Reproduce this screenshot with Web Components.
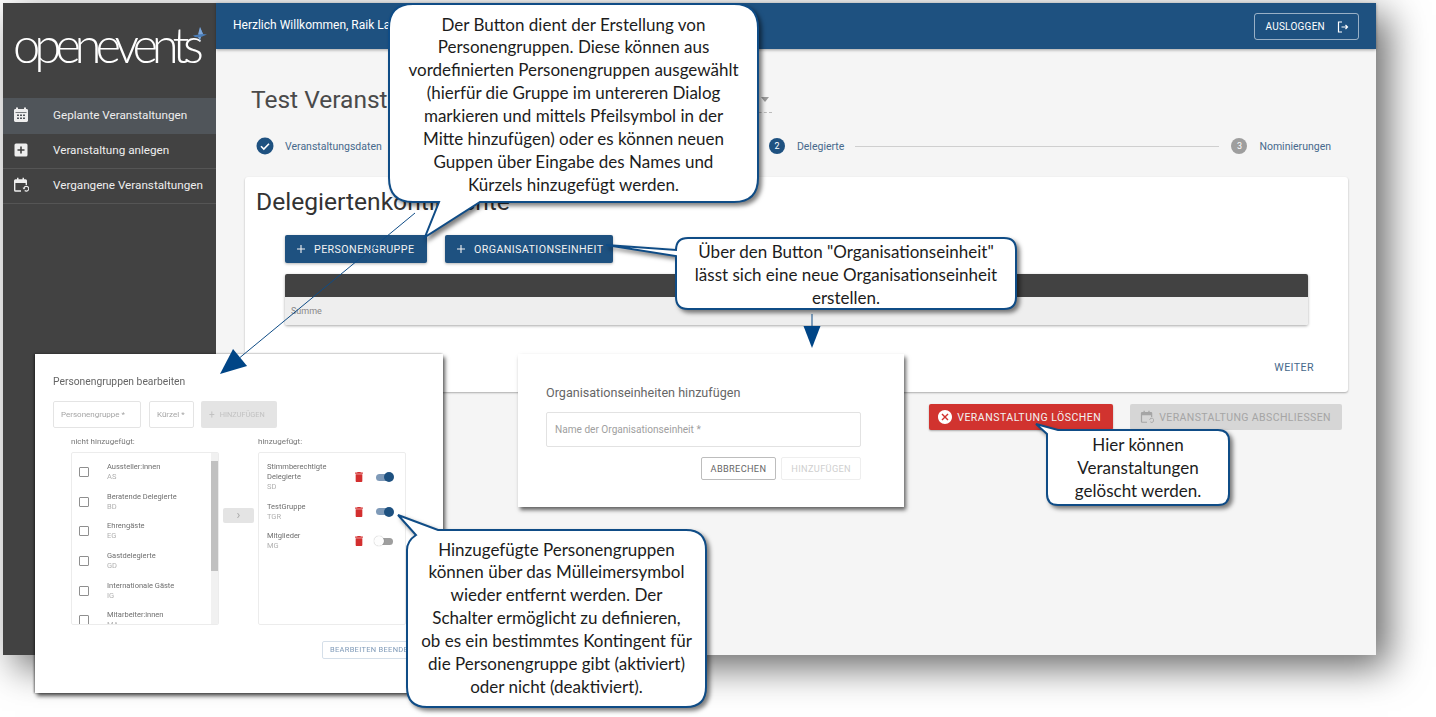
<!DOCTYPE html>
<html lang="de">
<head>
<meta charset="utf-8">
<title>openevents</title>
<style>
    html, body { margin: 0; background: #fff; }
    body { font-family: Roboto, "Liberation Sans", sans-serif; overflow: hidden; }
    oe-canvas { width: 1436px; height: 717px; }
</style>
</head>
<body>
<oe-canvas>
    <oe-window>
        <oe-sidebar slot="side">
            <oe-nav-item active>
                <svg slot="icon" width="16" height="16" viewBox="0 0 16 16"><path fill="#eee" d="M3 .5h2V2h6V.5h2V2h.6c.8 0 1.4.6 1.4 1.4v10.2c0 .8-.6 1.4-1.4 1.4H2.400c-.8 0-1.400-.6-1.400-1.400V3.400C1 2.600 1.600 2 2.400 2H3z"/><path fill="#50555a" d="M2.500 5h11v.8h-11zM4 7.500h2v1.500H4zM7 7.500h2v1.500H7zM10 7.500h2v1.500h-2zM4 10.500h2V12H4zM7 10.500h2V12H7zM10 10.500h2V12h-2z"/></svg>
                Geplante Veranstaltungen
            </oe-nav-item>
            <oe-nav-item>
                <svg slot="icon" width="16" height="16" viewBox="0 0 16 16"><rect x="1.500" y="1.500" width="13" height="13" rx="1.500" fill="#eee"/><path fill="#424242" d="M7.200 4.500h1.600v2.700h2.700v1.600H8.800v2.700H7.200V8.800H4.500V7.200h2.700z"/></svg>
                Veranstaltung anlegen
            </oe-nav-item>
            <oe-nav-item>
                <svg slot="icon" width="16" height="16" viewBox="0 0 16 16"><path fill="none" stroke="#eee" stroke-width="1.400" d="M8 14H2.500c-.5 0-.8-.3-.8-.8V3.800c0-.5.3-.8.8-.8h10c.5 0 .8.300.8.800V8"/><path fill="#eee" d="M2 3h11v3H2zM4 .8h1.500V3H4zM9.500.8H11V3H9.500z"/><path fill="none" stroke="#eee" stroke-width="1.100" d="M11 11.200a2.400 2.400 0 1 1 .7 2.300"/><path fill="#eee" d="M9.500 10.800h3l-1.500 1.600z"/></svg>
                Vergangene Veranstaltungen
            </oe-nav-item>
        </oe-sidebar>
        <oe-header slot="top" welcome="Herzlich Willkommen, Raik Lange"></oe-header>
        <oe-event-title>Test Veranstaltung</oe-event-title>
        <oe-stepper>
            <oe-step state="done">Veranstaltungsdaten</oe-step>
            <oe-step state="active" nr="2">Delegierte</oe-step>
            <oe-step nr="3">Nominierungen</oe-step>
        </oe-stepper>
        <oe-contingent-card></oe-contingent-card>
        <oe-event-actions></oe-event-actions>
    </oe-window>

    <oe-arrow x1="415" y1="213" x2="220" y2="374" len="26" wide="22"></oe-arrow>
    <oe-arrow x1="812" y1="314" x2="812" y2="348" len="22" wide="17"></oe-arrow>

    <oe-groups-dialog style="left:35px;top:354px"></oe-groups-dialog>
    <oe-unit-dialog style="left:518px;top:354px"></oe-unit-dialog>

    <oe-callout box="389 6 369 198" d="M413 4H734Q758 4 758 28V178Q758 202 734 202H480L425 237L439 202H413Q389 202 389 178V28Q389 4 413 4Z">
        Der Button dient der Erstellung von<br>Personengruppen. Diese können aus<br>vordefinierten Personengruppen ausgewählt<br>(hierfür die Gruppe im untereren Dialog<br>markieren und mittels Pfeilsymbol in der<br>Mitte hinzufügen) oder es können neuen<br>Guppen über Eingabe des Names und<br>Kürzels hinzugefügt werden.
    </oe-callout>
    <oe-callout box="676 240 340 71" d="M688 238H1004Q1016 238 1016 250V297Q1016 309 1004 309H688Q676 309 676 297V256L606 245L676 250Q676 238 688 238Z">
        Über den Button "Organisationseinheit"<br>lässt sich eine neue Organisationseinheit<br>erstellen.
    </oe-callout>
    <oe-callout box="1047 431 182 75" d="M1058 430H1218Q1229 430 1229 441V494Q1229 505 1218 505H1058Q1047 505 1047 494V434L1036 424Z">
        Hier können<br>Veranstaltungen<br>gelöscht werden.
    </oe-callout>
    <oe-callout box="407 530 299 177" d="M438 530H686Q706 530 706 550V687Q706 707 686 707H427Q407 707 407 687V550Q407 541 416 535L398 515Z">
        Hinzugefügte Personengruppen<br>können über das Mülleimersymbol<br>wieder entfernt werden. Der<br>Schalter ermöglicht zu definieren,<br>ob es ein bestimmtes Kontingent für<br>die Personengruppe gibt (aktiviert)<br>oder nicht (deaktiviert).
    </oe-callout>
</oe-canvas>

<script>
    const BLUE = '#1e5180';

    class OeCanvas extends HTMLElement {
        constructor() {
            super();
            this.attachShadow({ mode: 'open' }).innerHTML = `
                <style>
                    :host { display: block; position: relative; overflow: hidden; }
                </style>
                <slot></slot>
            `;
        }
    }

    class OeWindow extends HTMLElement {
        constructor() {
            super();
            this.attachShadow({ mode: 'open' }).innerHTML = `
                <style>
                    :host {
                        display: flex;
                        width: 1373px;
                        height: 652px;
                        margin: 3px 0 0 3px;
                        background: #f5f5f5;
                        box-shadow: 12px 12px 36px rgba(0,0,0,.6);
                    }
                    .right { flex: 1; display: flex; flex-direction: column; min-width: 0; }
                    .content { flex: 1; display: flex; flex-direction: column; padding: 0 28px 0 29px; }
                </style>
                <slot name="side"></slot>
                <div class="right">
                    <slot name="top"></slot>
                    <div class="content"><slot></slot></div>
                </div>
            `;
        }
    }

    class OeSidebar extends HTMLElement {
        constructor() {
            super();
            this.attachShadow({ mode: 'open' }).innerHTML = `
                <style>
                    :host { display: block; width: 213px; background: #424242; flex: none; }
                    .logo { height: 95px; box-sizing: border-box; padding: 11px 0 0 10px; position: relative; }
                    .word {
                        font: 300 49px/60px Lato, sans-serif;
                        letter-spacing: -6.100px;
                        color: #fff;
                    }
                    svg { position: absolute; left: 187px; top: 23px; }
                </style>
                <div class="logo">
                    <span class="word">openevents</span>
                    <svg width="18" height="18" viewBox="0 0 18 18"><path fill="#4a7db8" d="M10 1l3 7 4 .5-6 2.500-1 .5-5-.5-2-1.500 6-1z"/><path fill="#7ba6da" d="M10 1l3 7-5 .5zM8 11l3 0-1 4z"/></svg>
                </div>
                <slot></slot>
            `;
        }
    }

    class OeNavItem extends HTMLElement {
        constructor() {
            super();
            this.attachShadow({ mode: 'open' }).innerHTML = `
                <style>
                    :host {
                        display: flex;
                        align-items: center;
                        height: 32px;
                        padding: 0 0 2px 10px;
                        font-size: 11.700px;
                        color: #eee;
                        border-bottom: 1px solid #555;
                    }
                    :host([active]) { height: 34px; background: #50555a; border-bottom: 0; }
                    .icon { width: 40px; display: flex; flex: none; }
                </style>
                <span class="icon"><slot name="icon"></slot></span>
                <slot></slot>
            `;
        }
    }

    class OeHeader extends HTMLElement {
        constructor() {
            super();
            this.attachShadow({ mode: 'open' }).innerHTML = `
                <style>
                    :host {
                        display: flex;
                        align-items: center;
                        justify-content: space-between;
                        height: 46px;
                        flex: none;
                        padding: 0 17px;
                        background: ${BLUE};
                        color: #fff;
                        font-size: 12px;
                        box-shadow: 0 1px 3px rgba(0,0,0,.35);
                    }
                    .who { padding-bottom: 2px; }
                    .logout {
                        display: flex;
                        align-items: center;
                        gap: 12px;
                        height: 25px;
                        margin-top: 1px;
                        padding: 0 9px 0 10px;
                        border: 1px solid rgba(255,255,255,.55);
                        border-radius: 3px;
                        font-size: 10px;
                        letter-spacing: .25px;
                    }
                </style>
                <span class="who"></span>
                <span class="logout">AUSLOGGEN
                    <svg width="12" height="12" viewBox="0 0 12 12" fill="none" stroke="#fff" stroke-width="1.200"><path d="M5 1H1.500v10H5"/><path d="M4.500 6h6M8.500 4l2 2-2 2"/></svg>
                </span>
            `;
            this.shadowRoot.querySelector('.who').textContent = this.getAttribute('welcome');
        }
    }

    class OeEventTitle extends HTMLElement {
        constructor() {
            super();
            this.attachShadow({ mode: 'open' }).innerHTML = `
                <style>
                    :host {
                        display: flex;
                        justify-content: space-between;
                        align-items: center;
                        width: 521px;
                        height: 28px;
                        margin: 36px 0 0 6px;
                        font-size: 24.500px;
                        color: #4a4a4a;
                        position: relative;
                    }
                    i { width: 0; height: 0; margin-right: 3px; border: 4px solid transparent; border-top: 5px solid #9a9a9a; border-bottom: 0; }
                    u { position: absolute; right: 0; bottom: 0; width: 60px; border-bottom: 1px dashed #bbb; }
                </style>
                <slot></slot><i></i><u></u>
            `;
        }
    }

    class OeStepper extends HTMLElement {
        constructor() {
            super();
            this.attachShadow({ mode: 'open' }).innerHTML = `
                <style>
                    :host {
                        display: flex;
                        align-items: center;
                        height: 18px;
                        margin: 24px 17px 22px 11px;
                    }
                </style>
                <slot></slot>
            `;
        }
    }

    class OeStep extends HTMLElement {
        constructor() {
            super();
            const done = this.getAttribute('state') === 'done';
            const mark = done
                ? `<svg width="18" height="18" viewBox="0 0 18 18"><circle cx="9" cy="9" r="8.500" fill="${BLUE}"/><path d="M5 9.200l2.800 2.800L13 6.700" fill="none" stroke="#fff" stroke-width="1.600"/></svg>`
                : `<span class="nr">${this.getAttribute('nr')}</span>`;
            this.attachShadow({ mode: 'open' }).innerHTML = `
                <style>
                    :host { display: flex; align-items: center; flex: 1 1 auto; font-size: 10.500px; color: #47698c; }
                    :host(:last-child) { flex: 0 0 auto; }
                    .mark { display: flex; margin-right: ${done ? 11 : 12}px; }
                    .nr {
                        width: 16px; height: 16px; border-radius: 50%;
                        background: #9e9e9e; color: #fff;
                        font-size: 9px; line-height: 16px; text-align: center;
                    }
                    :host([state=active]) .nr { background: ${BLUE}; }
                    .line { flex: 1; height: 1px; background: #cfcfcf; margin: 0 12px 0 11px; }
                    :host(:last-child) .line { display: none; }
                    .wrap { display: flex; align-items: center; flex: 1; }
                </style>
                <span class="wrap">
                    <span class="mark">${mark}</span>
                    <slot></slot>
                    <span class="line"></span>
                </span>
            `;
        }
    }

    class OeButton extends HTMLElement {
        constructor() {
            super();
            this.attachShadow({ mode: 'open' }).innerHTML = `
                <style>
                    :host {
                        display: inline-flex;
                        align-items: center;
                        box-sizing: border-box;
                        height: 28px;
                        padding: 0 11px;
                        gap: 8px;
                        border-radius: 2px;
                        background: ${BLUE};
                        color: #f2f2f2;
                        font-size: 10.700px;
                        letter-spacing: .4px;
                        white-space: nowrap;
                        box-shadow: 0 1px 3px rgba(0,0,0,.3);
                    }
                    :host([kind=danger]) { background: #d1332f; height: 26px; font-size: 10.500px; letter-spacing: .5px; padding: 0 12px 0 9px; gap: 5px; box-shadow: 0 1px 2px rgba(0,0,0,.3); }
                    :host([kind=off]) { background: #d6d6d6; color: #a5a5a5; height: 26px; font-size: 10.500px; padding: 0 11px 0 10px; gap: 5px; box-shadow: none; }
                    :host([kind=flat]) { background: none; color: #47698c; box-shadow: none; padding: 0; height: 16px; }
                    .i { display: flex; }
                </style>
                <span class="i"><slot name="icon"></slot></span>
                <slot></slot>
            `;
        }
    }

    class OeContingentCard extends HTMLElement {
        constructor() {
            super();
            const plus = '<svg slot="icon" width="10" height="10" viewBox="0 0 10 10"><path d="M5 1v8M1 5h8" stroke="#f2f2f2" stroke-width="1.100"/></svg>';
            this.attachShadow({ mode: 'open' }).innerHTML = `
                <style>
                    :host {
                        display: block;
                        box-sizing: border-box;
                        height: 215px;
                        background: #fff;
                        border-radius: 3px;
                        box-shadow: 0 1px 2px rgba(0,0,0,.3);
                        position: relative;
                    }
                    h2 { margin: 0; padding: 10px 0 0 11px; height: 58px; box-sizing: border-box; font-size: 24.600px; line-height: 30px; font-weight: 400; color: #333; }
                    .btns { display: flex; gap: 18px; margin-left: 40px; }
                    .table { margin: 11px 40px 0; border-radius: 2px; overflow: hidden; box-shadow: 0 1px 3px rgba(0,0,0,.35); }
                    .head { height: 23px; background: #424242; }
                    .sum { height: 28px; background: #eee; padding-left: 6px; font-size: 9px; line-height: 28px; color: #888; }
                    .foot { display: flex; justify-content: flex-end; padding: 34px 34px 0 0; }
                </style>
                <h2>Delegiertenkontingente</h2>
                <div class="btns">
                    <oe-button style="width:142px">${plus}PERSONENGRUPPE</oe-button>
                    <oe-button style="width:168px">${plus}ORGANISATIONSEINHEIT</oe-button>
                </div>
                <div class="table">
                    <div class="head"></div>
                    <div class="sum">Summe</div>
                </div>
                <div class="foot"><oe-button kind="flat">WEITER</oe-button></div>
            `;
        }
    }

    class OeEventActions extends HTMLElement {
        constructor() {
            super();
            this.attachShadow({ mode: 'open' }).innerHTML = `
                <style>
                    :host { display: flex; justify-content: flex-end; gap: 17px; margin: 12px 6px 0 0; }
                </style>
                <oe-button kind="danger">
                    <svg slot="icon" width="14" height="14" viewBox="2 2 20 20"><path fill="#fff" d="M12 2C6.470 2 2 6.470 2 12s4.470 10 10 10 10-4.470 10-10S17.530 2 12 2zm5 13.590L15.590 17 12 13.410 8.410 17 7 15.590 10.590 12 7 8.410 8.410 7 12 10.590 15.590 7 17 8.410 13.410 12 17 15.590z"/></svg>
                    VERANSTALTUNG LÖSCHEN
                </oe-button>
                <oe-button kind="off">
                    <svg slot="icon" width="14" height="14" viewBox="0 0 16 16"><path fill="none" stroke="#a5a5a5" stroke-width="1.400" d="M8 14H2.500c-.5 0-.8-.3-.8-.8V3.800c0-.5.3-.8.8-.8h10c.5 0 .8.300.8.800V8"/><path fill="#a5a5a5" d="M2 3h11v3H2zM4 .8h1.500V3H4zM9.500.8H11V3H9.500z"/><path fill="none" stroke="#a5a5a5" stroke-width="1.100" d="M11 11.200a2.400 2.400 0 1 1 .7 2.300"/></svg>
                    VERANSTALTUNG ABSCHLIESSEN
                </oe-button>
            `;
        }
    }

    class OeGroupRow extends HTMLElement {
        constructor() {
            super();
            this.attachShadow({ mode: 'open' }).innerHTML = `
                <style>
                    :host { display: flex; align-items: flex-start; flex: none; height: 29.700px; box-sizing: border-box; }
                    .box { width: 8px; height: 8px; margin: 5px 18px 0 7px; border: 1px solid #8f8f8f; border-radius: 1px; flex: none; }
                    .txt { font-size: 7.500px; line-height: 10px; color: #6e6e6e; }
                    .abbr { color: #b0b0b0; }
                </style>
                <span class="box"></span>
                <span class="txt"><slot></slot><div class="abbr">${this.getAttribute('abbr')}</div></span>
            `;
        }
    }

    class OeChosenRow extends HTMLElement {
        constructor() {
            super();
            const on = this.hasAttribute('on');
            this.attachShadow({ mode: 'open' }).innerHTML = `
                <style>
                    :host { display: flex; align-items: center; box-sizing: border-box; padding-right: 12px; margin-bottom: 9.700px; }
                    .txt { flex: 1; font-size: 7.500px; line-height: 10px; color: #6e6e6e; }
                    .abbr { color: #b0b0b0; }
                    svg { flex: none; }
                    .sw { position: relative; width: 17px; height: 7px; margin-left: 12px; border-radius: 4px; background: ${on ? '#7f9ab8' : '#9e9e9e'}; flex: none; }
                    .sw i { position: absolute; top: -1.500px; ${on ? 'right: -1px' : 'left: -2px'}; width: 10px; height: 10px; border-radius: 50%; background: ${on ? BLUE : '#fdfdfd'}; ${on ? '' : 'box-shadow: 0 0 1px rgba(0,0,0,.4);'} }
                </style>
                <span class="txt"><slot></slot><div class="abbr">${this.getAttribute('abbr')}</div></span>
                <svg width="10" height="10" viewBox="5 3 14 18"><path fill="#d32f2f" d="M6 19c0 1.100.9 2 2 2h8c1.100 0 2-.9 2-2V7H6v12zM19 4h-3.500l-1-1h-5l-1 1H5v2h14V4z"/></svg>
                <span class="sw"><i></i></span>
            `;
        }
    }

    class OeGroupsDialog extends HTMLElement {
        constructor() {
            super();
            this.attachShadow({ mode: 'open' }).innerHTML = `
                <style>
                    :host {
                        position: absolute;
                        width: 408px;
                        height: 339px;
                        background: #fff;
                        box-shadow: -1px 0 2px rgba(0,0,0,.45), 2px 3px 4px rgba(0,0,0,.65);
                        font-size: 9px;
                        color: #777;
                    }
                    .inner { box-sizing: border-box; height: 100%; padding: 21px 0 0 18px; filter: blur(.35px); }
                    h3 { margin: 0 0 13px; font-size: 10.300px; line-height: 13px; font-weight: 400; color: #666; }
                    .row { display: flex; gap: 8px; }
                    .field { box-sizing: border-box; height: 27px; padding: 0 7px; border: 1px solid #e4e4e4; border-radius: 2px; font-size: 8px; line-height: 25px; color: #a5a5a5; }
                    .add { display: flex; align-items: center; gap: 5px; box-sizing: border-box; width: 76px; height: 27px; padding-left: 8px; background: #e4e4e4; border-radius: 2px; font-size: 7.400px; color: #c2c2c2; margin-left: -1px; }
                    .cols { display: grid; grid-template-columns: 148px 39px 148px; margin: 9px 0 0 18px; }
                    .lab { font-size: 8px; line-height: 10px; height: 15px; color: #777; }
                    .list { position: relative; box-sizing: border-box; height: 173px; padding: 9px 0 0; border: 1px solid #ececec; border-radius: 2px; overflow: hidden; }
                    .scroll { position: absolute; right: 0; top: 0; bottom: 0; width: 7px; background: #f1f1f1; }
                    .scroll i { position: absolute; left: 0; right: 0; top: 8px; height: 110px; background: #c1c1c1; }
                    .move { align-self: start; width: 31px; height: 15px; margin: 71px 0 0 4px; background: #e4e4e4; border-radius: 2px; text-align: center; font-size: 13px; line-height: 13px; color: #aaa; }
                    .list.chosen { padding: 9px 0 0 8px; }
                    .end { position: absolute; left: 287px; top: 287px; box-sizing: border-box; width: 96px; height: 18px; padding-left: 7px; border: 1px solid #d5dfe9; border-radius: 2px; font-size: 7.500px; line-height: 16px; letter-spacing: .3px; color: #7f9ab8; white-space: nowrap; }
                </style>
                <div class="inner">
                    <h3>Personengruppen bearbeiten</h3>
                    <div class="row">
                        <span class="field" style="width:88px">Personengruppe *</span>
                        <span class="field" style="width:45px">Kürzel *</span>
                        <span class="add"><span style="font-size:10px">+</span>HINZUFÜGEN</span>
                    </div>
                    <div class="cols">
                        <div>
                            <div class="lab">nicht hinzugefügt:</div>
                            <div class="list">
                                <oe-group-row abbr="AS">Aussteller:innen</oe-group-row>
                                <oe-group-row abbr="BD">Beratende Delegierte</oe-group-row>
                                <oe-group-row abbr="EG">Ehrengäste</oe-group-row>
                                <oe-group-row abbr="GD">Gastdelegierte</oe-group-row>
                                <oe-group-row abbr="IG">Internationale Gäste</oe-group-row>
                                <oe-group-row abbr="MA">Mitarbeiter:innen</oe-group-row>
                                <span class="scroll"><i></i></span>
                            </div>
                        </div>
                        <div class="move">›</div>
                        <div>
                            <div class="lab">hinzugefügt:</div>
                            <div class="list chosen">
                                <oe-chosen-row on abbr="SD">Stimmberechtigte<br>Delegierte</oe-chosen-row>
                                <oe-chosen-row on abbr="TGR">TestGruppe</oe-chosen-row>
                                <oe-chosen-row abbr="MG">Mitglieder</oe-chosen-row>
                            </div>
                        </div>
                    </div>
                    <span class="end">BEARBEITEN BEENDEN</span>
                </div>
            `;
        }
    }

    class OeUnitDialog extends HTMLElement {
        constructor() {
            super();
            this.attachShadow({ mode: 'open' }).innerHTML = `
                <style>
                    :host {
                        position: absolute;
                        box-sizing: border-box;
                        width: 386px;
                        height: 153px;
                        padding: 31px 43px 0 28px;
                        background: #fff;
                        box-shadow: 2px 3px 4px rgba(0,0,0,.6);
                    }
                    h3 { margin: 0 0 12px; font-size: 12.600px; line-height: 15px; font-weight: 400; color: #666; }
                    .field { box-sizing: border-box; height: 35px; padding-left: 8px; border: 1px solid #e2e2e2; border-radius: 2px; font-size: 10.100px; line-height: 33px; color: #a0a0a0; }
                    .btns { display: flex; justify-content: flex-end; gap: 5px; margin-top: 10px; }
                    .btn { box-sizing: border-box; height: 23px; padding: 0 9px; border: 1px solid #bdbdbd; border-radius: 2px; font-size: 9.200px; line-height: 21px; letter-spacing: .35px; color: #666; }
                    .btn.off { border-color: #eee; color: #cfcfcf; }
                </style>
                <h3>Organisationseinheiten hinzufügen</h3>
                <div class="field">Name der Organisationseinheit *</div>
                <div class="btns">
                    <span class="btn">ABBRECHEN</span>
                    <span class="btn off">HINZUFÜGEN</span>
                </div>
            `;
        }
    }

    // d is written in page coordinates, box only says where the text goes
    class OeCallout extends HTMLElement {
        constructor() {
            super();
            const [x, y, w, h] = this.getAttribute('box').split(' ').map(Number);
            this.attachShadow({ mode: 'open' }).innerHTML = `
                <style>
                    :host {
                        position: absolute;
                        left: ${x}px; top: ${y}px; width: ${w}px; height: ${h}px;
                        display: flex;
                        align-items: center;
                        justify-content: center;
                        text-align: center;
                        font: 17px/22.850px Lato, "Open Sans", sans-serif;
                        color: #1c1c1c;
                        white-space: nowrap;
                    }
                    svg {
                        position: absolute; left: 0; top: 0;
                        overflow: visible;
                        filter: drop-shadow(3px 3px 2px rgba(0,0,0,.5));
                    }
                    .t { position: relative; }
                </style>
                <svg width="${w}" height="${h}" viewBox="${x} ${y} ${w} ${h}">
                    <path d="${this.getAttribute('d')}" fill="#fff" stroke="#0f4c86" stroke-width="2"/>
                </svg>
                <div class="t"><slot></slot></div>
            `;
        }
    }

    class OeArrow extends HTMLElement {
        constructor() {
            super();
            const [x1, y1, x2, y2] = ['x1', 'y1', 'x2', 'y2'].map(a => +this.getAttribute(a));
            const len = +this.getAttribute('len');
            const wide = +this.getAttribute('wide') / 2;
            const d = Math.hypot(x2 - x1, y2 - y1);
            const ux = (x2 - x1) / d, uy = (y2 - y1) / d;
            const bx = x2 - ux * len, by = y2 - uy * len;
            const pts = `${x2},${y2} ${bx - uy * wide},${by + ux * wide} ${bx + uy * wide},${by - ux * wide}`;
            this.attachShadow({ mode: 'open' }).innerHTML = `
                <style>
                    :host { position: absolute; left: 0; top: 0; width: 1436px; height: 717px; pointer-events: none; z-index: 2; }
                </style>
                <svg width="1436" height="717">
                    <line x1="${x1}" y1="${y1}" x2="${bx}" y2="${by}" stroke="#0f4c86" stroke-width="1"/>
                    <polygon points="${pts}" fill="#004586"/>
                </svg>
            `;
        }
    }

    customElements.define('oe-canvas', OeCanvas);
    customElements.define('oe-window', OeWindow);
    customElements.define('oe-sidebar', OeSidebar);
    customElements.define('oe-nav-item', OeNavItem);
    customElements.define('oe-header', OeHeader);
    customElements.define('oe-event-title', OeEventTitle);
    customElements.define('oe-stepper', OeStepper);
    customElements.define('oe-step', OeStep);
    customElements.define('oe-button', OeButton);
    customElements.define('oe-contingent-card', OeContingentCard);
    customElements.define('oe-event-actions', OeEventActions);
    customElements.define('oe-group-row', OeGroupRow);
    customElements.define('oe-chosen-row', OeChosenRow);
    customElements.define('oe-groups-dialog', OeGroupsDialog);
    customElements.define('oe-unit-dialog', OeUnitDialog);
    customElements.define('oe-callout', OeCallout);
    customElements.define('oe-arrow', OeArrow);
</script>
</body>
</html>
